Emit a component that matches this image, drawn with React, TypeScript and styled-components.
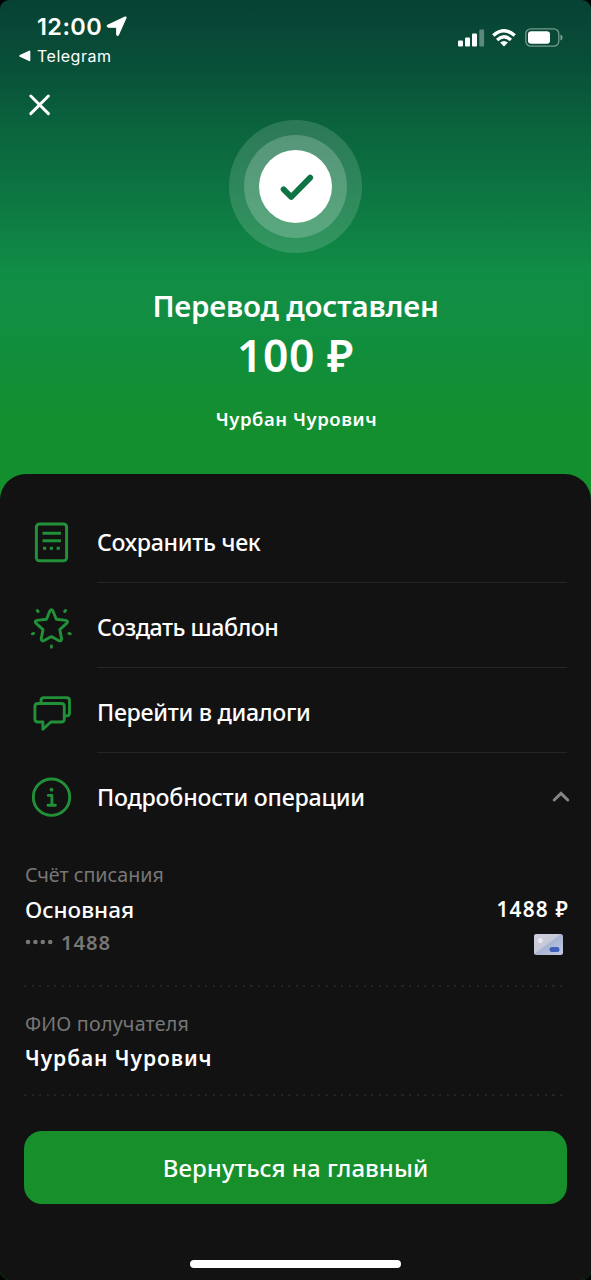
import React from "react";
import styled, { createGlobalStyle } from "styled-components";

const GlobalStyle = createGlobalStyle`
  * { box-sizing: border-box; }
  body { margin: 0; background: #000; }
`;

const Screen = styled.main`
  display: flex;
  flex-direction: column;
  width: 591px;
  height: 1280px;
  overflow: hidden;
  border-radius: 9px;
  color: #fff;
  font-family: "Noto Sans", "Open Sans", sans-serif;
  background: linear-gradient(
    180deg,
    #074134 0px,
    #084e38 60px,
    #0a633d 125px,
    #0d7742 200px,
    #118e46 275px,
    #118e3e 340px,
    #148f30 420px,
    #15902d 500px
  );
`;

const StatusBar = styled.header`
  display: flex;
  justify-content: space-between;
  height: 78px;
  padding: 13px 28px 0 19px;
  font-family: Inter, sans-serif;
`;

const StatusLeft = styled.div`
  display: flex;
  flex-direction: column;
`;

const Clock = styled.div`
  display: flex;
  align-items: center;
  gap: 4px;
  height: 27px;
  padding-left: 18px;
  font-size: 23.5px;
  font-weight: 600;
  letter-spacing: 0.4px;
`;

const BackApp = styled.div`
  display: flex;
  align-items: center;
  gap: 6px;
  height: 32px;
  font-size: 16px;
  letter-spacing: 0.5px;
`;

const StatusIcons = styled.div`
  display: flex;
  align-items: center;
  gap: 9px;
  height: 49px;

  svg:first-child {
    margin-right: -2px;
  }
`;

const Hero = styled.section`
  display: flex;
  flex-direction: column;
  align-items: center;
  height: 396px;
`;

const NavRow = styled.div`
  display: flex;
  width: 100%;
  height: 42px;
  padding: 16px 0 0 28px;
`;

const Halo = styled.div`
  display: grid;
  place-items: center;
  width: 133px;
  height: 133px;
  border-radius: 50%;
  background: rgba(255, 255, 255, 0.14);
`;

const InnerHalo = styled(Halo)`
  width: 103px;
  height: 103px;
  background: rgba(255, 255, 255, 0.2);
`;

const Disc = styled(Halo)`
  width: 73px;
  height: 73px;
  background: #fff;
`;

interface TextProps {
  $size: number;
  $line: number;
  $weight?: number;
  $spacing?: number;
  $color?: string;
}

const Text = styled.span<TextProps>`
  display: block;
  font-size: ${(p) => p.$size}px;
  line-height: ${(p) => p.$line}px;
  font-weight: ${(p) => p.$weight ?? 400};
  letter-spacing: ${(p) => p.$spacing ?? 0}px;
  color: ${(p) => p.$color ?? "#fff"};
  white-space: nowrap;
`;

const HeroText = styled.div`
  display: flex;
  flex-direction: column;
  align-items: center;
  padding-top: 33px;
`;

const Recipient = styled.div`
  padding: 23px 0 0 2px;
`;

const Sheet = styled.section`
  display: flex;
  flex: 1;
  flex-direction: column;
  padding: 24px 24px 0;
  border-radius: 26px 26px 0 0;
  background: #121212;
`;

const MenuRow = styled.div`
  display: flex;
  height: 85px;
`;

const MenuIcon = styled.div`
  display: flex;
  align-items: center;
  width: 73px;
  padding: 4px 0 0 6px;
`;

const MenuBody = styled.div<{ $last?: boolean }>`
  display: flex;
  flex: 1;
  align-items: center;
  justify-content: space-between;
  padding-top: 4px;
  margin-right: ${(p) => (p.$last ? -3 : 0)}px;
  border-bottom: 1.5px solid ${(p) => (p.$last ? "transparent" : "#252525")};
`;

const Details = styled.div<{ $height: number; $top: number }>`
  display: flex;
  flex-direction: column;
  height: ${(p) => p.$height}px;
  padding-top: ${(p) => p.$top}px;
  padding-left: 1px;
`;

const DetailLine = styled.div`
  display: flex;
  align-items: flex-start;
  justify-content: space-between;
  margin-right: -2px;
`;

const MaskedNumber = styled.div`
  display: flex;
  align-items: center;
  gap: 8px;
`;

const Dots = styled.div`
  height: 2px;
  margin-right: 3px;
  background: repeating-linear-gradient(90deg, #242424 0 2px, transparent 2px 7.55px);
`;

const CardWrap = styled.div`
  display: flex;
  padding: 4px 6px 0 0;
`;

const MainButton = styled.button`
  display: flex;
  align-items: center;
  justify-content: center;
  width: 543px;
  height: 73px;
  margin-top: 35px;
  padding: 0;
  border: 0;
  border-radius: 18px;
  background: #178f2b;
  font-family: inherit;
`;

const HomeBar = styled.div`
  align-self: center;
  width: 211px;
  height: 8px;
  margin-top: 56px;
  border-radius: 4px;
  background: #fff;
`;

const GREEN = "#219038";

const ReceiptIcon = () => (
  <svg width="42" height="44" viewBox="0 0 42 44" fill="none" stroke={GREEN} strokeWidth="3">
    <rect x="6.4" y="2.9" width="30.2" height="36.8" rx="3" />
    <path d="M12.5 12.2H31M12.5 19.8H31" />
    <path d="M13 27.3h3.2M19.8 27.3h3.2M26.6 27.3h3.2" />
  </svg>
);

const StarIcon = () => (
  <svg width="42" height="44" viewBox="0 0 42 44" fill="none" stroke={GREEN} strokeWidth="2.9" strokeLinecap="round" strokeLinejoin="round">
    <path d="M19.8 5.1Q21.4 2.2 23 5.1L26.3 13.2L35.8 14.4Q38.8 15.2 36.6 17.4L29.8 23.6L31.6 32.9Q31.4 35.6 28.6 34.6L21.4 30.6L14.2 34.6Q11.4 35.6 11.2 32.9L13 23.6L6.2 17.4Q4 15.2 7 14.4L16.5 13.2Z" />
    <path d="M7.3 4.5l.8 1M35.5 4.5l-.8 1M2.4 27.8l1.3-.4M40.2 27.8l-1.3-.4M21.4 40v1.2" />
  </svg>
);

const ChatIcon = () => (
  <svg width="42" height="44" viewBox="0 0 42 44" fill="none" stroke={GREEN} strokeWidth="2.9" strokeLinejoin="round">
    <path d="M8 12.5H31.3Q34.3 12.5 34.3 15.5V28Q34.3 31 31.3 31H20.8L12.9 38.2V31H8Q4.9 31 4.9 28V15.5Q4.9 12.5 8 12.5Z" />
    <path d="M11 12.5V9.6Q11 6.6 14 6.6H36.5Q39.5 6.6 39.5 9.6V21.9Q39.5 24.9 36.5 24.9H34.3" />
  </svg>
);

const InfoIcon = () => (
  <svg width="42" height="44" viewBox="0 0 42 44" fill="none" stroke={GREEN} strokeWidth="2.9">
    <circle cx="21.5" cy="21.2" r="18.2" />
    <path d="M18.2 19.4H21.9V29M18 29.2H25.4" strokeLinecap="round" strokeLinejoin="round" />
    <circle cx="21.5" cy="13.7" r="1.9" fill={GREEN} stroke="none" />
  </svg>
);

const LocationArrow = () => (
  <svg width="21" height="21" viewBox="0 0 20 20" fill="#fff" stroke="#fff" strokeWidth="1" strokeLinejoin="round">
    <path d="M18.2 1Q19.5.5 19 1.9L11.9 17.9Q11 19.4 10.2 17.6V10.6H2.4Q.3 10 1.6 8.8Z" />
  </svg>
);

const StatusGlyphs = () => (
  <StatusIcons>
    <svg width="27" height="18" viewBox="0 0 27 18" fill="#fff">
      <rect x="0" y="11.5" width="5" height="6" rx="1" />
      <rect x="7" y="8.5" width="5" height="9" rx="1" />
      <rect x="14" y="4.5" width="5" height="13" rx="1" />
      <rect x="21.3" y="0.5" width="4.8" height="17" rx="1" opacity=".35" />
    </svg>
    <svg width="24" height="18" viewBox="0 0 24 18" fill="none" stroke="#fff" strokeWidth="3.4">
      <path d="M1.3 6.5Q12-3 22.7 6.5M5.1 10.9Q12 4.7 18.9 10.9" />
      <path d="M8.1 13.6Q12 10.2 15.9 13.6L12 17.5Z" fill="#fff" stroke="none" />
    </svg>
    <svg width="38" height="19" viewBox="0 0 38 19" fill="none">
      <rect x=".8" y=".8" width="33" height="17.4" rx="5" stroke="#fff" strokeWidth="1.3" opacity=".45" />
      <rect x="3" y="3.2" width="22" height="12.6" rx="3.2" fill="#fff" />
      <path d="M35.5 6.5Q37.5 7.2 37.5 9.5Q37.5 11.8 35.5 12.5Z" fill="#fff" opacity=".5" />
    </svg>
  </StatusIcons>
);

const BankCard = () => (
  <svg width="29" height="21" viewBox="0 0 29 21">
    <defs>
      <linearGradient id="card" x1="0" y1="0" x2="1" y2="1">
        <stop offset="0" stopColor="#c9cad8" />
        <stop offset=".45" stopColor="#bcc0d4" />
        <stop offset=".5" stopColor="#a9b4d4" />
        <stop offset="1" stopColor="#c3cae0" />
      </linearGradient>
    </defs>
    <rect width="29" height="21" rx="2.5" fill="url(#card)" />
    <path d="M0 20.5L26 0H2.5Q0 0 0 2.5Z" fill="#d6d6e0" opacity=".4" />
    <circle cx="6.2" cy="6.5" r="2.6" fill="#e8e7ee" />
    <rect x="15.5" y="13" width="10" height="5" rx="2.5" fill="#3f60b8" />
  </svg>
);

const menu = [
  { label: "Сохранить чек", Icon: ReceiptIcon, spacing: -0.3 },
  { label: "Создать шаблон", Icon: StarIcon, spacing: -0.5 },
  { label: "Перейти в диалоги", Icon: ChatIcon, spacing: -0.3 },
  { label: "Подробности операции", Icon: InfoIcon, spacing: -0.22 },
];

export default function App() {
  return (
    <>
      <GlobalStyle />
      <Screen>
        <StatusBar>
          <StatusLeft>
            <Clock>
              12:00
              <LocationArrow />
            </Clock>
            <BackApp>
              <svg width="12" height="12" viewBox="0 0 12 12" fill="#fff">
                <path d="M.8 5.1L10 .7Q11.3.3 11.3 1.5V10.2Q11.3 11.5 10 11L.8 6.7Q-.3 5.9.8 5.1Z" />
              </svg>
              Telegram
            </BackApp>
          </StatusLeft>
          <StatusGlyphs />
        </StatusBar>
        <Hero>
          <NavRow>
            <svg width="23" height="23" viewBox="0 0 23 23" stroke="#fff" strokeWidth="2.9" strokeLinecap="round">
              <path d="M2.8 2L20.4 19.6M20.4 2L2.8 19.6" />
            </svg>
          </NavRow>
          <Halo>
            <InnerHalo>
              <Disc>
                <svg width="40" height="32" viewBox="0 0 40 32" fill="none" stroke="#0e7444" strokeWidth="5.8" strokeLinecap="round" strokeLinejoin="round">
                  <path d="M7.6 18.4L15.2 26L34.2 6.6" />
                </svg>
              </Disc>
            </InnerHalo>
          </Halo>
          <HeroText>
            <Text $size={29.5} $line={40} $weight={600} $spacing={-0.2}>Перевод доставлен</Text>
            <Text $size={44.5} $line={58} $weight={600} $spacing={0.5}>100 ₽</Text>
            <Recipient>
              <Text $size={18.5} $line={24} $weight={600} $spacing={0.55}>Чурбан Чурович</Text>
            </Recipient>
          </HeroText>
        </Hero>
        <Sheet>
          {menu.map(({ label, Icon, spacing }, i) => (
            <MenuRow key={label}>
              <MenuIcon>
                <Icon />
              </MenuIcon>
              <MenuBody $last={i === 3}>
                <Text $size={23.2} $line={32} $weight={500} $spacing={spacing}>{label}</Text>
                {i === 3 && (
                  <svg width="18" height="12" viewBox="0 0 18 12" fill="none" stroke="#858585" strokeWidth="3" strokeLinecap="round">
                    <path d="M2.2 9L9 2.4L15.8 9" />
                  </svg>
                )}
              </MenuBody>
            </MenuRow>
          ))}
          <Details $height={147} $top={23}>
            <Text $size={19.7} $line={28} $color="#777">Счёт списания</Text>
            <DetailLine>
              <Text $size={22.5} $line={41} $weight={500}>Основная</Text>
              <Text $size={20.8} $line={41} $weight={600} $spacing={1.2}>1488 ₽</Text>
            </DetailLine>
            <DetailLine>
              <MaskedNumber>
                <svg width="28" height="6" viewBox="0 0 28 6" fill="#777">
                  <circle cx="3" cy="3" r="2.3" />
                  <circle cx="10.4" cy="3" r="2.3" />
                  <circle cx="17.8" cy="3" r="2.3" />
                  <circle cx="25.2" cy="3" r="2.3" />
                </svg>
                <Text $size={20.2} $line={24} $weight={600} $spacing={0.95} $color="#777">1488</Text>
              </MaskedNumber>
              <CardWrap>
                <BankCard />
              </CardWrap>
            </DetailLine>
          </Details>
          <Dots />
          <Details $height={107} $top={22}>
            <Text $size={19.7} $line={29} $spacing={0.2} $color="#777">ФИО получателя</Text>
            <Text $size={21} $line={40} $weight={600} $spacing={0.93}>Чурбан Чурович</Text>
          </Details>
          <Dots />
          <MainButton>
            <Text $size={24} $line={32} $weight={500} $spacing={0.05}>Вернуться на главный</Text>
          </MainButton>
          <HomeBar />
        </Sheet>
      </Screen>
    </>
  );
}
